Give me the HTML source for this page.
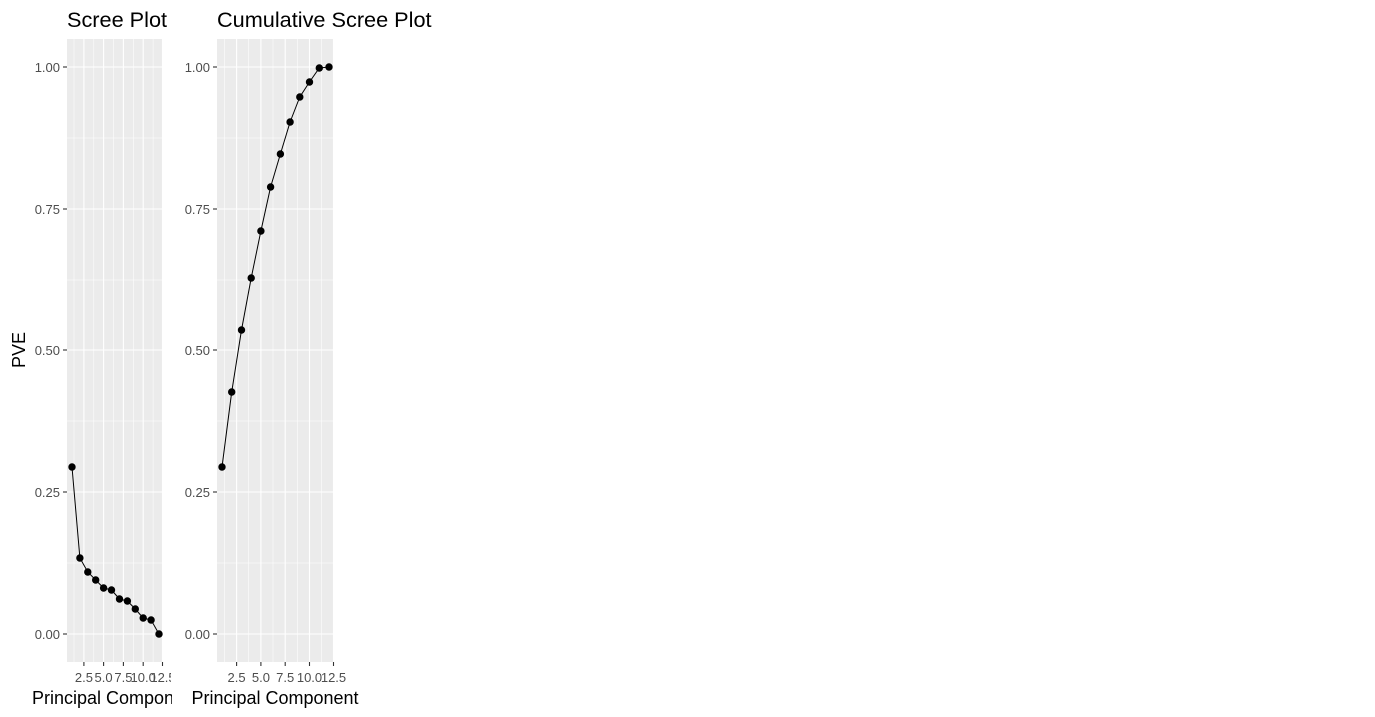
<!DOCTYPE html>
<html><head><style>body{margin:0;background:#fff}svg{display:block}</style></head><body>
<svg width="1375" height="717" xmlns="http://www.w3.org/2000/svg" font-family="Liberation Sans, sans-serif">
<rect width="1375" height="717" fill="#fff"/>
<!-- Panel 1 -->
<rect x="67" y="39" width="96" height="623" fill="#ebebeb"/>
<g stroke="#fff" stroke-width="0.55">
<line x1="67" x2="163" y1="138" y2="138"/><line x1="67" x2="163" y1="280" y2="280"/><line x1="67" x2="163" y1="421" y2="421"/><line x1="67" x2="163" y1="563" y2="563"/>
<line x1="74" x2="74" y1="39" y2="662"/><line x1="93.8" x2="93.8" y1="39" y2="662"/><line x1="113.5" x2="113.5" y1="39" y2="662"/><line x1="133.3" x2="133.3" y1="39" y2="662"/><line x1="153.1" x2="153.1" y1="39" y2="662"/>
</g>
<g stroke="#fff" stroke-width="1.1">
<line x1="67" x2="163" y1="67" y2="67"/><line x1="67" x2="163" y1="209" y2="209"/><line x1="67" x2="163" y1="350" y2="350"/><line x1="67" x2="163" y1="492" y2="492"/><line x1="67" x2="163" y1="634" y2="634"/>
<line x1="83.9" x2="83.9" y1="39" y2="662"/><line x1="103.6" x2="103.6" y1="39" y2="662"/><line x1="123.4" x2="123.4" y1="39" y2="662"/><line x1="143.2" x2="143.2" y1="39" y2="662"/><line x1="162.5" x2="162.5" y1="39" y2="662"/>
</g>
<polyline fill="none" stroke="#000" stroke-width="1" points="72,467 79.9,558 87.8,572 95.7,580 103.6,588 111.5,590 119.5,599 127.4,601 135.3,609 143.2,618 151.1,620 159,634"/>
<g fill="#000"><circle cx="72" cy="467" r="3.7"/><circle cx="79.9" cy="558" r="3.7"/><circle cx="87.8" cy="572" r="3.7"/><circle cx="95.7" cy="580" r="3.7"/><circle cx="103.6" cy="588" r="3.7"/><circle cx="111.5" cy="590" r="3.7"/><circle cx="119.5" cy="599" r="3.7"/><circle cx="127.4" cy="601" r="3.7"/><circle cx="135.3" cy="609" r="3.7"/><circle cx="143.2" cy="618" r="3.7"/><circle cx="151.1" cy="620" r="3.7"/><circle cx="159" cy="634" r="3.7"/></g>
<g stroke="#333" stroke-width="1.1">
<line x1="63" x2="67" y1="67" y2="67"/><line x1="63" x2="67" y1="209" y2="209"/><line x1="63" x2="67" y1="350" y2="350"/><line x1="63" x2="67" y1="492" y2="492"/><line x1="63" x2="67" y1="634" y2="634"/>
<line x1="83.9" x2="83.9" y1="662" y2="666"/><line x1="103.6" x2="103.6" y1="662" y2="666"/><line x1="123.4" x2="123.4" y1="662" y2="666"/><line x1="143.2" x2="143.2" y1="662" y2="666"/><line x1="162.5" x2="162.5" y1="662" y2="666"/>
</g>
<g fill="#4d4d4d" font-size="13" text-anchor="end">
<text x="60" y="72">1.00</text><text x="60" y="214">0.75</text><text x="60" y="355">0.50</text><text x="60" y="497">0.25</text><text x="60" y="639">0.00</text>
</g>
<g fill="#4d4d4d" font-size="13" text-anchor="middle">
<text x="83.9" y="682">2.5</text><text x="103.6" y="682">5.0</text><text x="123.4" y="682">7.5</text><text x="143.2" y="682">10.0</text><text x="163" y="682">12.5</text>
</g>
<rect x="171" y="668" width="20" height="16" fill="#fff"/>
<text x="67" y="27" font-size="21.7" fill="#000">Scree Plot</text>
<text x="32" y="704" font-size="18" fill="#000">Principal Compon</text>
<rect x="172" y="686" width="30" height="25" fill="#fff"/>
<text transform="translate(25,350) rotate(-90)" font-size="18" text-anchor="middle" fill="#000">PVE</text>
<!-- Panel 2 -->
<rect x="217" y="39" width="117" height="623" fill="#ebebeb"/>
<g stroke="#fff" stroke-width="0.55">
<line x1="217" x2="334" y1="138" y2="138"/><line x1="217" x2="334" y1="280" y2="280"/><line x1="217" x2="334" y1="421" y2="421"/><line x1="217" x2="334" y1="563" y2="563"/>
<line x1="224.4" x2="224.4" y1="39" y2="662"/><line x1="248.7" x2="248.7" y1="39" y2="662"/><line x1="273" x2="273" y1="39" y2="662"/><line x1="297.4" x2="297.4" y1="39" y2="662"/><line x1="321.7" x2="321.7" y1="39" y2="662"/>
</g>
<g stroke="#fff" stroke-width="1.1">
<line x1="217" x2="334" y1="67" y2="67"/><line x1="217" x2="334" y1="209" y2="209"/><line x1="217" x2="334" y1="350" y2="350"/><line x1="217" x2="334" y1="492" y2="492"/><line x1="217" x2="334" y1="634" y2="634"/>
<line x1="236.6" x2="236.6" y1="39" y2="662"/><line x1="260.9" x2="260.9" y1="39" y2="662"/><line x1="285.2" x2="285.2" y1="39" y2="662"/><line x1="309.5" x2="309.5" y1="39" y2="662"/><line x1="333.5" x2="333.5" y1="39" y2="662"/>
</g>
<polyline fill="none" stroke="#000" stroke-width="1" points="222,467 231.7,392 241.5,330 251.2,278 260.9,231 270.6,187 280.4,154 290.1,122 299.8,97 309.5,82 319.3,68 329,67"/>
<g fill="#000"><circle cx="222" cy="467" r="3.7"/><circle cx="231.7" cy="392" r="3.7"/><circle cx="241.5" cy="330" r="3.7"/><circle cx="251.2" cy="278" r="3.7"/><circle cx="260.9" cy="231" r="3.7"/><circle cx="270.6" cy="187" r="3.7"/><circle cx="280.4" cy="154" r="3.7"/><circle cx="290.1" cy="122" r="3.7"/><circle cx="299.8" cy="97" r="3.7"/><circle cx="309.5" cy="82" r="3.7"/><circle cx="319.3" cy="68" r="3.7"/><circle cx="329" cy="67" r="3.7"/></g>
<g stroke="#333" stroke-width="1.1">
<line x1="213" x2="217" y1="67" y2="67"/><line x1="213" x2="217" y1="209" y2="209"/><line x1="213" x2="217" y1="350" y2="350"/><line x1="213" x2="217" y1="492" y2="492"/><line x1="213" x2="217" y1="634" y2="634"/>
<line x1="236.6" x2="236.6" y1="662" y2="666"/><line x1="260.9" x2="260.9" y1="662" y2="666"/><line x1="285.2" x2="285.2" y1="662" y2="666"/><line x1="309.5" x2="309.5" y1="662" y2="666"/><line x1="333.5" x2="333.5" y1="662" y2="666"/>
</g>
<g fill="#4d4d4d" font-size="13" text-anchor="end">
<text x="210" y="72">1.00</text><text x="210" y="214">0.75</text><text x="210" y="355">0.50</text><text x="210" y="497">0.25</text><text x="210" y="639">0.00</text>
</g>
<g fill="#4d4d4d" font-size="13" text-anchor="middle">
<text x="236.6" y="682">2.5</text><text x="260.9" y="682">5.0</text><text x="285.2" y="682">7.5</text><text x="309.5" y="682">10.0</text><text x="333.5" y="682">12.5</text>
</g>
<text x="217" y="27" font-size="21.7" fill="#000">Cumulative Scree Plot</text>
<text x="275" y="704" font-size="18" text-anchor="middle" fill="#000">Principal Component</text>
</svg>
</body></html>
